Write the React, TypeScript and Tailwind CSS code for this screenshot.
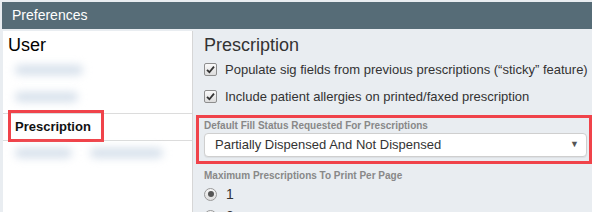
import React from "react";

function CheckBox() {
  return (
    <span className="w-[13px] h-[13px] shrink-0 rounded-[2px] border border-[#8e8e8e] bg-gradient-to-b from-[#fafafa] to-[#dcdcdc] flex items-center justify-center">
      <svg width="9" height="9" viewBox="0 0 9 9">
        <path d="M1 4.8 L3.4 7.2 L8 1.6" fill="none" stroke="#333" strokeWidth="1.8" />
      </svg>
    </span>
  );
}

function Radio({ checked }: { checked?: boolean }) {
  return (
    <span className="w-[13px] h-[13px] shrink-0 rounded-full border border-[#9a9a9a] bg-gradient-to-b from-[#f6f6f6] to-[#dedede] flex items-center justify-center">
      {checked && <span className="w-[6px] h-[6px] rounded-full bg-[#555]" />}
    </span>
  );
}

function Blur({ w }: { w: number[] }) {
  return (
    <div className="flex items-center gap-[18px] pl-[12px]">
      {w.map((x, i) => (
        <span key={i} className="h-[10px] rounded-full bg-[#d6e0eb] blur-[4px]" style={{ width: x }} />
      ))}
    </div>
  );
}

export default function App() {
  return (
    <div className="w-[592px] h-[212px] overflow-hidden bg-[#e9edf1] pt-[2px] font-['Liberation_Sans',Arial,sans-serif] text-[#333]">
      <div className="ml-[2px] h-[27px] bg-[#566c77] text-white text-[14px] leading-[27px] pl-[10px]">Preferences</div>
      <div className="flex mt-[2px] h-[181px]">
        <div className="ml-[3px] w-[190px] h-full bg-white border-r border-[#d6d6d6]">
          <div className="pl-[5px] pt-[3px] text-[18px] leading-[22px] text-black">User</div>
          <div className="h-[27px] flex items-center"><Blur w={[68]} /></div>
          <div className="h-[27px] flex items-center"><Blur w={[63]} /></div>
          <div className="h-[3px]" />
          <div className="relative h-[28px] border-y border-[#dcdcdc] flex items-center pl-[12px] text-[13px] font-bold text-[#111] bg-white">
            Prescription
            <span className="absolute left-[5px] top-[-4px] w-[96px] h-[32px] border-[3px] border-[#f0434a]" />
          </div>
          <div className="h-[24px] flex items-center"><Blur w={[57, 73]} /></div>
        </div>
        <div className="flex-1">
          <div className="pl-[11px] pt-[3px] text-[18px] leading-[22px]">Prescription</div>
          <div className="h-[27px] pl-[11px] flex items-center gap-[8px] text-[13px]">
            <CheckBox />
            <span>Populate sig fields from previous prescriptions (“sticky” feature)</span>
          </div>
          <div className="h-[27px] pl-[11px] flex items-center gap-[8px] text-[13px]">
            <CheckBox />
            <span>Include patient allergies on printed/faxed prescription</span>
          </div>
          <div className="mt-[5px] ml-[3px] h-[49px] border-[3px] border-[#f0434a] pl-[5px] pr-[2px]">
            <div className="pt-[1px] text-[10px] leading-[14px] font-bold text-[#888]">Default Fill Status Requested For Prescriptions</div>
            <div className="h-[24px] bg-white border border-[#cfcfcf] rounded-[4px] shadow-[0_1px_1px_rgba(0,0,0,0.06)] flex items-center justify-between pl-[10px] pr-[7px] text-[13px]">
              <span>Partially Dispensed And Not Dispensed</span>
              <span className="text-[9px] text-[#555]">▼</span>
            </div>
          </div>
          <div className="mt-[5px] pl-[11px] text-[10px] leading-[14px] font-bold text-[#888]">Maximum Prescriptions To Print Per Page</div>
          <div className="h-[22px] pl-[11px] flex items-center gap-[9px] text-[14px]">
            <Radio checked />
            <span>1</span>
          </div>
          <div className="h-[22px] pl-[11px] flex items-center gap-[9px] text-[14px]">
            <Radio />
            <span>2</span>
          </div>
        </div>
      </div>
    </div>
  );
}
